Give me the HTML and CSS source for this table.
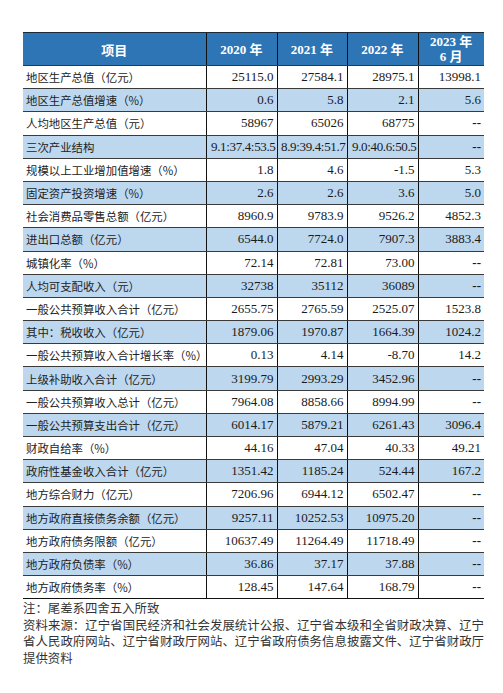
FILE: index.html
```html
<!DOCTYPE html>
<html lang="zh">
<head>
<meta charset="utf-8">
<link rel="stylesheet" href="styles.css">
</head>
<body>
<div class="page">
<table class="data">
<colgroup>
<col class="c-label"><col class="c-num"><col class="c-num2"><col class="c-num"><col class="c-last">
</colgroup>
<thead>
<tr><th>项目</th><th>2020 年</th><th>2021 年</th><th>2022 年</th><th class="two">2023 年<br>6 月</th></tr>
</thead>
<tbody>
<tr><td>地区生产总值（亿元）</td><td>25115.0</td><td>27584.1</td><td>28975.1</td><td>13998.1</td></tr>
<tr class="alt"><td>地区生产总值增速（%）</td><td>0.6</td><td>5.8</td><td>2.1</td><td>5.6</td></tr>
<tr><td>人均地区生产总值（元）</td><td>58967</td><td>65026</td><td>68775</td><td class="dash">--</td></tr>
<tr class="alt"><td>三次产业结构</td><td class="tight">9.1:37.4:53.5</td><td class="tight">8.9:39.4:51.7</td><td class="tight">9.0:40.6:50.5</td><td class="dash">--</td></tr>
<tr><td>规模以上工业增加值增速（%）</td><td>1.8</td><td>4.6</td><td>-1.5</td><td>5.3</td></tr>
<tr class="alt"><td>固定资产投资增速（%）</td><td>2.6</td><td>2.6</td><td>3.6</td><td>5.0</td></tr>
<tr><td>社会消费品零售总额（亿元）</td><td>8960.9</td><td>9783.9</td><td>9526.2</td><td>4852.3</td></tr>
<tr class="alt"><td>进出口总额（亿元）</td><td>6544.0</td><td>7724.0</td><td>7907.3</td><td>3883.4</td></tr>
<tr><td>城镇化率（%）</td><td>72.14</td><td>72.81</td><td>73.00</td><td class="dash">--</td></tr>
<tr class="alt"><td>人均可支配收入（元）</td><td>32738</td><td>35112</td><td>36089</td><td class="dash">--</td></tr>
<tr><td>一般公共预算收入合计（亿元）</td><td>2655.75</td><td>2765.59</td><td>2525.07</td><td>1523.8</td></tr>
<tr class="alt"><td>其中：税收收入（亿元）</td><td>1879.06</td><td>1970.87</td><td>1664.39</td><td>1024.2</td></tr>
<tr><td>一般公共预算收入合计增长率（%）</td><td>0.13</td><td>4.14</td><td>-8.70</td><td>14.2</td></tr>
<tr class="alt"><td>上级补助收入合计（亿元）</td><td>3199.79</td><td>2993.29</td><td>3452.96</td><td class="dash">--</td></tr>
<tr><td>一般公共预算收入总计（亿元）</td><td>7964.08</td><td>8858.66</td><td>8994.99</td><td class="dash">--</td></tr>
<tr class="alt"><td>一般公共预算支出合计（亿元）</td><td>6014.17</td><td>5879.21</td><td>6261.43</td><td>3096.4</td></tr>
<tr><td>财政自给率（%）</td><td>44.16</td><td>47.04</td><td>40.33</td><td>49.21</td></tr>
<tr class="alt"><td>政府性基金收入合计（亿元）</td><td>1351.42</td><td>1185.24</td><td>524.44</td><td>167.2</td></tr>
<tr><td>地方综合财力（亿元）</td><td>7206.96</td><td>6944.12</td><td>6502.47</td><td class="dash">--</td></tr>
<tr class="alt"><td>地方政府直接债务余额（亿元）</td><td>9257.11</td><td>10252.53</td><td>10975.20</td><td class="dash">--</td></tr>
<tr><td>地方政府债务限额（亿元）</td><td>10637.49</td><td>11264.49</td><td>11718.49</td><td class="dash">--</td></tr>
<tr class="alt"><td>地方政府负债率（%）</td><td>36.86</td><td>37.17</td><td>37.88</td><td class="dash">--</td></tr>
<tr class="last"><td>地方政府债务率（%）</td><td>128.45</td><td>147.64</td><td>168.79</td><td class="dash">--</td></tr>
</tbody>
</table>
<div class="notes">
<p>注：尾差系四舍五入所致</p>
<p>资料来源：辽宁省国民经济和社会发展统计公报、辽宁省本级和全省财政决算、辽宁省人民政府网站、辽宁省财政厅网站、辽宁省政府债务信息披露文件、辽宁省财政厅提供资料</p>
</div>
</div>
</body>
</html>
```

FILE: styles.css
```css
html, body {
  margin: 0;
  padding: 0;
  background: #ffffff;
}

.page {
  padding: 32px 0 0 23px;
  width: 461px;
}

.data {
  width: 461px;
  border-collapse: collapse;
  table-layout: fixed;
  font-family: "Liberation Serif", "Noto Sans CJK SC", serif;
  font-size: 13px;
  color: #1a1a1a;
}

.c-label { width: 183px; }
.c-num { width: 71px; }
.c-num2 { width: 70px; }
.c-last { width: 66px; }

.data thead tr {
  height: 33px;
}

.data th {
  background: #2e75b6;
  color: #ffffff;
  font-weight: 700;
  font-size: 13px;
  text-align: center;
  line-height: 15px;
  padding: 0;
  border-top: 1.5px solid #1c2b3a;
  border-bottom: 1px solid #2a3a4a;
  border-left: 1px solid #111111;
}

.data th:first-child {
  border-left: none;
  font-family: "Noto Sans CJK SC", sans-serif;
}

.data tbody tr {
  height: 23.2px;
}

.data td {
  padding: 0 3px 0 3px;
  text-align: right;
  line-height: 16px;
  white-space: nowrap;
  border-bottom: 1px solid #3a3a3a;
  border-left: 1px solid #111111;
}

.data td:first-child {
  text-align: left;
  border-left: none;
  font-family: "Noto Sans CJK SC", sans-serif;
  font-size: 11.4px;
  color: #222222;
}

.data td.tight {
  padding: 0 1px;
  letter-spacing: -0.35px;
}

.data td.dash {
  font-weight: 700;
}

.data tr.alt td {
  background: #bdd7ee;
}

.data tr.last td {
  border-bottom: 1.5px solid #111111;
}

.notes {
  width: 461px;
  margin-top: 1px;
  font-family: "Noto Sans CJK SC", sans-serif;
  font-size: 12.4px;
  line-height: 16.5px;
  color: #333333;
}

.notes p {
  margin: 0;
  text-align: justify;
}
```
